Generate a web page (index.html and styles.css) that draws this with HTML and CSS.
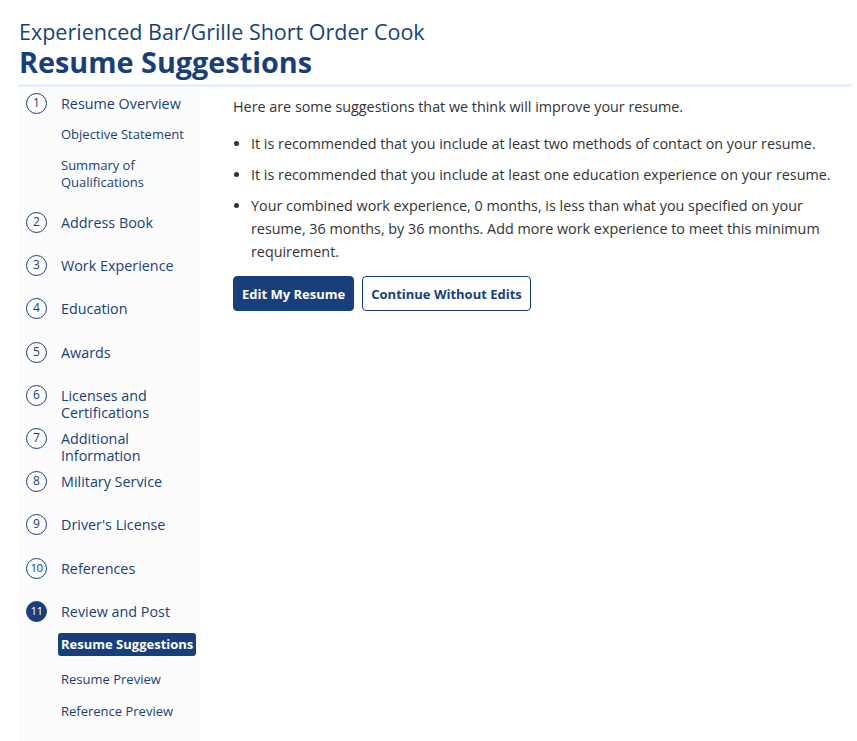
FILE: index.html
```html
<!DOCTYPE html>
<html lang="en">
<head>
<meta charset="utf-8">
<title>Resume Suggestions</title>
<link rel="stylesheet" href="styles.css">
</head>
<body>
<div class="page">
  <header class="header">
    <div class="job-title">Experienced Bar/Grille Short Order Cook</div>
    <h1 class="page-title">Resume Suggestions</h1>
  </header>
  <div class="divider"></div>
  <div class="layout">
    <nav class="sidebar">
      <ol class="steps">
        <li class="step has-sub">
          <div class="step-row"><span class="num">1</span><a class="step-label" href="#">Resume Overview</a></div>
          <ul class="subs">
            <li class="sub"><a href="#">Objective Statement</a></li>
            <li class="sub"><a href="#">Summary of<br>Qualifications</a></li>
          </ul>
        </li>
        <li class="step"><div class="step-row"><span class="num">2</span><a class="step-label" href="#">Address Book</a></div></li>
        <li class="step"><div class="step-row"><span class="num">3</span><a class="step-label" href="#">Work Experience</a></div></li>
        <li class="step"><div class="step-row"><span class="num">4</span><a class="step-label" href="#">Education</a></div></li>
        <li class="step"><div class="step-row"><span class="num">5</span><a class="step-label" href="#">Awards</a></div></li>
        <li class="step"><div class="step-row"><span class="num">6</span><a class="step-label" href="#">Licenses and<br>Certifications</a></div></li>
        <li class="step"><div class="step-row"><span class="num">7</span><a class="step-label" href="#">Additional<br>Information</a></div></li>
        <li class="step"><div class="step-row"><span class="num">8</span><a class="step-label" href="#">Military Service</a></div></li>
        <li class="step"><div class="step-row"><span class="num">9</span><a class="step-label" href="#">Driver's License</a></div></li>
        <li class="step"><div class="step-row"><span class="num num-small">10</span><a class="step-label" href="#">References</a></div></li>
        <li class="step has-sub current">
          <div class="step-row"><span class="num num-small filled">11</span><a class="step-label" href="#">Review and Post</a></div>
          <ul class="subs subs-last">
            <li class="sub active"><a href="#">Resume Suggestions</a></li>
            <li class="sub"><a href="#">Resume Preview</a></li>
            <li class="sub"><a href="#">Reference Preview</a></li>
          </ul>
        </li>
      </ol>
    </nav>
    <main class="main">
      <p class="intro">Here are some suggestions that we think will improve your resume.</p>
      <ul class="suggestions">
        <li>It is recommended that you include at least two methods of contact on your resume.</li>
        <li>It is recommended that you include at least one education experience on your resume.</li>
        <li>Your combined work experience, 0 months, is less than what you specified on your resume, 36 months, by 36 months. Add more work experience to meet this minimum requirement.</li>
      </ul>
      <div class="actions">
        <button class="btn btn-primary" type="button">Edit My Resume</button>
        <button class="btn btn-outline" type="button">Continue Without Edits</button>
      </div>
    </main>
  </div>
</div>
</body>
</html>
```

FILE: styles.css
```css
* { box-sizing: border-box; }

html, body {
  margin: 0;
  padding: 0;
  background: #ffffff;
}

body {
  font-family: "Open Sans", "Liberation Sans", sans-serif;
  color: #333333;
}

.page {
  padding: 18px 5px 0 18px;
  min-height: 741px;
  display: flex;
  flex-direction: column;
}

.job-title {
  font-size: 21.5px;
  line-height: 28px;
  color: #173f7c;
  padding-left: 1px;
}

.page-title {
  margin: 0;
  font-size: 28.8px;
  line-height: 32px;
  font-weight: 700;
  color: #173f7c;
  padding-left: 1px;
}

.divider {
  height: 3px;
  margin-top: 6px;
  background: #e6f0fc;
}

.layout {
  display: flex;
  gap: 33px;
  flex: 1;
}

.sidebar {
  width: 182px;
  flex: none;
  background: #fcfcfd;
  padding-top: 6px;
}

.steps {
  list-style: none;
  margin: 0;
  padding: 0;
}

.step {
  min-height: 43.2px;
}

.step.has-sub {
  padding-bottom: 14px;
}

.step-row {
  display: flex;
  align-items: flex-start;
  padding-left: 8px;
}

.num {
  flex: none;
  width: 21px;
  height: 21px;
  border: 1.5px solid #173f7c;
  border-radius: 50%;
  color: #173f7c;
  font-size: 12px;
  line-height: 18px;
  text-align: center;
  margin-right: 14px;
}

.num-small {
  font-size: 11.5px;
  letter-spacing: -0.5px;
}

.num.filled {
  background: #173f7c;
  color: #ffffff;
}

.step-label {
  color: #173f7c;
  text-decoration: none;
  font-size: 14.35px;
  line-height: 17px;
  padding-top: 2px;
}

.subs {
  list-style: none;
  margin: 4px 0 0 0;
  padding: 0 0 0 40px;
}

.sub {
  padding: 4px 0;
}

.sub a {
  display: inline-block;
  padding: 3px 3px;
  font-size: 13px;
  line-height: 17px;
  color: #173f7c;
  text-decoration: none;
  border-radius: 3px;
}

.subs-last {
  margin-top: 6px;
}

.sub.active {
  margin-bottom: 3px;
}

.sub.active a {
  background: #173f7c;
  color: #ffffff;
  font-weight: 700;
}

.main {
  flex: 1;
  padding-top: 8px;
  font-size: 14.35px;
  line-height: 23px;
  color: #333333;
}

.intro {
  margin: 0;
}

.suggestions {
  margin: 14px 0 0 0;
  padding-left: 18px;
}

.suggestions li {
  margin-bottom: 8px;
}

.suggestions li:last-child {
  margin-bottom: 0;
}

.actions {
  display: flex;
  gap: 8px;
  margin-top: 13px;
}

.btn {
  font-family: "Open Sans", "Liberation Sans", sans-serif;
  font-size: 13px;
  font-weight: 700;
  height: 35px;
  padding: 0 8px;
  border-radius: 4px;
  cursor: pointer;
}

.btn-primary {
  background: #173f7c;
  color: #ffffff;
  border: 1px solid #173f7c;
}

.btn-outline {
  background: #ffffff;
  color: #173f7c;
  border: 1px solid #173f7c;
}
```
